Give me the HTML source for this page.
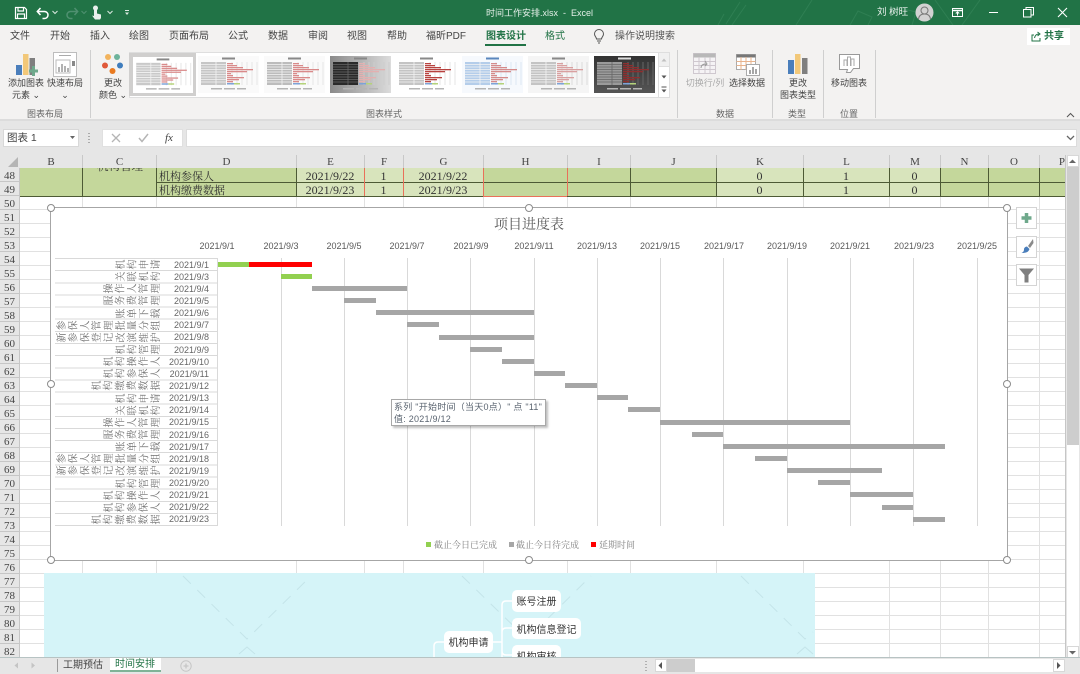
<!DOCTYPE html>
<html lang="zh">
<head>
<meta charset="utf-8">
<title>时间工作安排.xlsx - Excel</title>
<style>
html,body{margin:0;padding:0;width:1080px;height:674px;overflow:hidden;background:#fff}
body{position:relative;font-family:"Liberation Sans","Noto Sans CJK SC",sans-serif;color:#444}
div,span,svg{position:absolute;box-sizing:border-box}
.t{white-space:nowrap;font-size:10px;line-height:14px;color:#444}
.lb{white-space:nowrap;font-size:9px;line-height:12px;color:#444;text-align:center}
.gl{white-space:nowrap;font-size:9px;line-height:12px;color:#666;text-align:center;top:108px}
.sep{top:50px;width:1px;height:68px;background:#cfcfcf}
.ch{top:155px;height:13px;font:11px/14px "Liberation Serif",serif;color:#444;text-align:center;border-right:1px solid #c8c8c8}
.rn{left:0;width:20px;height:14px;font:11px/16px "Liberation Serif",serif;color:#444;text-align:center;background:#e6e6e6;border-bottom:1px solid #c6c6c6;border-right:1px solid #c6c6c6}
.cl{top:168px;height:28px}
.v{top:168px;width:1px;height:28px;background:#4d5a35}
.vr{background:#e9705a}
.gv{top:196px;width:1px;height:462px;background:#e1e1e1}
.val{font:12px/14px "Liberation Serif",serif;color:#333;text-align:center;white-space:nowrap}
.cn{font:11px/14px "Liberation Serif","Noto Serif CJK SC",serif;color:#333;white-space:nowrap}
.ax{top:240px;width:50px;text-align:center;font:9px/12px "Liberation Sans",sans-serif;color:#595959;white-space:nowrap}
.gr{top:258px;width:1px;height:268px;background:#d9d9d9}
.r{left:0;width:220px;height:12px}
.n{position:absolute;left:50px;top:12px;width:12px;height:112px;writing-mode:vertical-rl;text-align:end;transform:rotate(-90deg);transform-origin:0 0;font:10px/12px "Noto Serif CJK SC",serif;letter-spacing:1.800px;color:#6f6f6f;white-space:nowrap}
.d{left:150px;width:59px;top:-.5px;text-align:right;font:9px/12px "Liberation Sans",sans-serif;color:#666;white-space:nowrap}
.b{height:5px;background:#a6a6a6}
.hd{width:8px;height:8px;border-radius:50%;background:#fff;border:1.500px solid #8c8c8c}
.cb{left:1016px;width:21px;height:22px;background:#fff;border:1px solid #d4d4d4}
.node{background:#fff;border-radius:5px;font-size:10px;line-height:25px;color:#333;text-align:center;white-space:nowrap}
.tm{top:56px;filter:blur(.35px)}
</style>
</head>
<body>

<!-- title bar -->
<div style="left:0;top:0;width:1080px;height:25px;background:#217346"></div>
<svg style="left:700px;top:0" width="300" height="25" fill="none" stroke="#2f7f53" stroke-width="1">
<path d="M40 2l-14 22M46 5l-14 20M96 25l16-25M150 25l8-14 14 6-4 8M200 8l16 4-4 13M235 0l18 25M262 25l18-25M24 14l-6 11"/>
</svg>
<svg style="left:14px;top:6px" width="14" height="14" fill="none" stroke="#fff" stroke-width="1.200"><path d="M1.500 1.500h9l2 2v9h-11zM4 1.500v3.500h5.500v-3.500M3.500 12.500v-4.500h7v4.500"/></svg>
<svg style="left:36px;top:6px" width="14" height="14" fill="none" stroke="#fff" stroke-width="1.500"><path d="M1.500 5.500h7a3.500 3.500 0 0 1 0 7h-2M4.500 2l-3.200 3.500 3.200 3.500"/></svg>
<svg style="left:52px;top:10px" width="6" height="5" fill="none" stroke="#dbe8e0"><path d="M.5 1l2.500 2.500 2.500-2.500"/></svg>
<svg style="left:65px;top:6px" width="14" height="14" fill="none" stroke="#4f9070" stroke-width="1.500"><path d="M12.500 5.500h-7a3.500 3.500 0 0 0 0 7h2M9.500 2l3.200 3.500-3.200 3.500"/></svg>
<svg style="left:81px;top:10px" width="6" height="5" fill="none" stroke="#4f9070"><path d="M.5 1l2.500 2.500 2.500-2.500"/></svg>
<svg style="left:90px;top:5px" width="14" height="15" fill="#e8f0ec"><circle cx="5.500" cy="3" r="2.500"/><path d="M4 5h3v3.500l4 1v3.500l-1 1.500h-5l-3-4 2 .5z"/></svg>
<svg style="left:107px;top:10px" width="6" height="5" fill="none" stroke="#dbe8e0"><path d="M.5 1l2.500 2.500 2.500-2.500"/></svg>
<svg style="left:124px;top:10px" width="6" height="6" fill="#dbe8e0"><rect x="1" y="0" width="4" height="1"/><path d="M1 2.500h4l-2 2.500z"/></svg>
<div class="t" style="left:486px;top:6px;color:#e4efe8;font-size:9px">时间工作安排.xlsx&nbsp; -&nbsp; Excel</div>
<div class="t" style="left:877px;top:6px;color:#f0f5f2;font-size:9.500px">刘 树旺</div>
<svg style="left:915px;top:3px" width="19" height="19"><circle cx="9.500" cy="9.500" r="9" fill="#d2d2d2"/><g fill="none" stroke="#777" stroke-width="1"><circle cx="9.500" cy="7.500" r="3.500"/><path d="M3.500 16c.5-3.500 3-5 6-5s5.500 1.500 6 5"/></g></svg>
<svg style="left:952px;top:7px" width="12" height="11" fill="none" stroke="#fff"><rect x=".5" y="1.500" width="10" height="8"/><path d="M.5 3.500h10" stroke-width="1.500"/><path d="M5.500 8.500v-3.500M3.800 6.500l1.700-1.700 1.700 1.700"/></svg>
<div style="left:989px;top:12px;width:9px;height:1px;background:#fff"></div>
<svg style="left:1023px;top:7px" width="11" height="11" fill="none" stroke="#fff"><rect x=".5" y="2.500" width="7.500" height="7.500"/><path d="M3 2.500v-2h7.500v7.500h-2.500"/></svg>
<svg style="left:1057px;top:7px" width="11" height="11" fill="none" stroke="#fff" stroke-width="1.100"><path d="M1 1l9 9M10 1l-9 9"/></svg>

<!-- ribbon -->
<div style="left:0;top:25px;width:1080px;height:96px;background:#f3f2f1;border-bottom:2px solid #dcdcdc"></div>
<div class="t" style="left:10px;top:30px">文件</div>
<div class="t" style="left:50px;top:30px">开始</div>
<div class="t" style="left:90px;top:30px">插入</div>
<div class="t" style="left:129px;top:30px">绘图</div>
<div class="t" style="left:169px;top:30px">页面布局</div>
<div class="t" style="left:228px;top:30px">公式</div>
<div class="t" style="left:268px;top:30px">数据</div>
<div class="t" style="left:308px;top:30px">审阅</div>
<div class="t" style="left:347px;top:30px">视图</div>
<div class="t" style="left:387px;top:30px">帮助</div>
<div class="t" style="left:426px;top:30px">福昕PDF</div>
<div class="t" style="left:486px;top:30px;color:#217346;font-weight:bold">图表设计</div>
<div style="left:485px;top:44px;width:41px;height:2px;background:#217346"></div>
<div class="t" style="left:545px;top:30px;color:#217346">格式</div>
<svg style="left:593px;top:29px" width="12" height="15" fill="none" stroke="#555"><path d="M3.500 10c0-2-2-2.500-2-5a4.500 4.500 0 0 1 9 0c0 2.500-2 3-2 5zM4 12h4M5 14h2"/></svg>
<div class="t" style="left:615px;top:30px;color:#555">操作说明搜索</div>
<div style="left:1027px;top:28px;width:43px;height:17px;background:#fff"></div>
<svg style="left:1031px;top:31px" width="11" height="11" fill="none" stroke="#217346"><path d="M3 4h-2v6h8v-3M3.500 7c.5-2.500 2-4 4.500-4M6.500 1l2.500 2-2.500 2"/></svg>
<div class="t" style="left:1044px;top:30px;color:#217346;font-weight:bold">共享</div>

<!-- ribbon buttons -->
<svg style="left:14px;top:52px" width="26" height="26"><rect x="2" y="13" width="6" height="10" fill="#4a7ebb"/><rect x="9" y="2" width="5.500" height="21" fill="#f2c879"/><rect x="15.500" y="6" width="5.500" height="17" fill="#7f7f7f"/><path d="M15 19h9M19.500 14v10" stroke="#6fa98c" stroke-width="3"/></svg>
<div class="lb" style="left:8px;top:77px;width:36px">添加图表</div>
<div class="lb" style="left:8px;top:89px;width:36px">元素 ⌄</div>
<svg style="left:53px;top:52px" width="24" height="25"><rect x=".5" y=".5" width="23" height="24" fill="#fff" stroke="#bdbdbd"/><path d="M6 3.500h12" stroke="#aaa"/><rect x="3" y="8" width="14" height="13" fill="none" stroke="#bbb"/><path d="M6 20v-5M9 20v-8M12 20v-6M15 20v-4" stroke="#999" stroke-width="1.500"/><rect x="19" y="9" width="3" height="5" fill="#888"/></svg>
<div class="lb" style="left:47px;top:77px;width:36px">快速布局</div>
<div class="lb" style="left:47px;top:89px;width:36px">⌄</div>
<div class="sep" style="left:90px"></div>
<svg style="left:100px;top:52px" width="26" height="24"><circle cx="8" cy="5" r="3" fill="#f2b35d"/><circle cx="17" cy="5" r="3" fill="#6db39b"/><circle cx="5" cy="13.500" r="3" fill="#e0593a"/><circle cx="20" cy="13.500" r="3" fill="#3f7dbd"/><circle cx="12.500" cy="19" r="3" fill="#e97a1f"/></svg>
<div class="lb" style="left:95px;top:77px;width:36px">更改</div>
<div class="lb" style="left:95px;top:89px;width:36px">颜色 ⌄</div>

<!-- gallery -->
<div style="left:129px;top:52px;width:541px;height:46px;background:#fff;border:1px solid #dedede"></div>
<svg width="0" height="0" style="left:0;top:0">
<symbol id="g" viewBox="0 0 61 37">
<rect x="3" y="6" width="25" height="23" style="fill:var(--tb,#c9c9c9)"/>
<path d="M3 8.500h25M3 11h25M3 13.500h25M3 16h25M3 18.500h25M3 21h25M3 23.500h25M3 26h25M18 6v23" style="stroke:var(--tl,#f3f3f3)" stroke-width=".8"/>
<path d="M34 6v23M39 6v23M44 6v23M49 6v23M54 6v23M59 6v23" style="stroke:var(--gl,#e6e6e6)" stroke-width="1"/>
<g style="fill:var(--bar,#d98a8a)"><rect x="29" y="7" width="6" height="1.300"/><rect x="29" y="9" width="10" height="1.300"/><rect x="29" y="11" width="16" height="1.300"/><rect x="29" y="13" width="26" height="1.300"/><rect x="29" y="15" width="20" height="1.300"/><rect x="29" y="17" width="4" height="1.300"/><rect x="29" y="19" width="6" height="1.300"/><rect x="29" y="21" width="17" height="1.300"/><rect x="29" y="23" width="12" height="1.300"/><rect x="29" y="25" width="6" height="1.300"/></g>
<rect x="29" y="27" width="7" height="1.500" fill="#7ca3d8"/><rect x="36" y="27" width="6" height="1.500" fill="#b5d37a"/>
<rect x="24" y="1.500" width="13" height="2" style="fill:var(--ti,#888)"/>
<rect x="13" y="32" width="11" height="1.500" fill="#b5b5b5"/><rect x="26" y="32" width="11" height="1.500" fill="#b5b5b5"/><rect x="39" y="32" width="9" height="1.500" fill="#b5b5b5"/>
</symbol>
</svg>
<div style="left:129px;top:53px;width:67px;height:43px;background:#d0cfce"></div>
<svg class="tm" style="left:133px;top:57px;background:#fff" width="60" height="36"><use href="#g"/></svg>
<svg class="tm" style="left:198px;background:#fafafa;--tb:#c6c6c6" width="61" height="37"><use href="#g"/></svg>
<svg class="tm" style="left:264px;background:#fafafa;--tb:#bcbcbc" width="61" height="37"><use href="#g"/></svg>
<svg class="tm" style="left:330px;background:linear-gradient(90deg,#8a8a8a,#dcdcdc);--tb:#2a2a2a;--tl:#666;--gl:#ccc;--bar:#e3b0b0" width="61" height="37"><use href="#g"/></svg>
<svg class="tm" style="left:396px;background:#fff;--tb:#c4c4c4;--bar:#b8423f" width="61" height="37"><use href="#g"/></svg>
<svg class="tm" style="left:462px;background:#f6f9fd;--tb:#b4cdea;--gl:#dce7f3;--bar:#d58b8b;--ti:#5a86bd" width="61" height="37"><use href="#g"/></svg>
<svg class="tm" style="left:528px;background:#f5f5f5;--tb:#c4c4c4;--gl:#dcdcdc;--bar:#d9a0a0" width="61" height="37"><use href="#g"/></svg>
<svg class="tm" style="left:594px;background:linear-gradient(180deg,#333,#555);--tb:#9a9a9a;--tl:#666;--gl:#666;--bar:#8e2f2f;--ti:#ddd" width="61" height="37"><use href="#g"/></svg>
<div style="left:658px;top:52px;width:12px;height:46px;background:#fff;border:1px solid #dedede"></div>
<div style="left:658px;top:52px;width:12px;height:15px;background:#f0f0f0;border:1px solid #dedede"></div>
<svg style="left:658px;top:52px" width="12" height="46"><path d="M3.500 9.500h5l-2.500-3z" fill="#c0c0c0"/><path d="M3.500 23.500h5l-2.500 3z" fill="#555"/><path d="M3.500 35h5" stroke="#555"/><path d="M3.500 37.500h5l-2.500 3z" fill="#555"/></svg>
<div class="sep" style="left:677px"></div>
<svg style="left:693px;top:53px" width="24" height="22" fill="none" stroke="#cfc8cf"><rect x=".5" y=".5" width="22" height="20" fill="#f5f3f5"/><rect x=".5" y=".5" width="22" height="4" fill="#b8b8b8" stroke="none"/><path d="M.5 8.500h22M.5 12.500h22M.5 16.500h22M6 4v17M12 4v17M17 4v17"/><path d="M8 15c0-3 2-4 5-4M12 8l2 3-2 2" stroke="#999"/></svg>
<div class="lb" style="left:683px;top:77px;width:44px;color:#aaa">切换行/列</div>
<svg style="left:736px;top:54px" width="24" height="22" fill="none" stroke="#aaa"><rect x=".5" y=".5" width="19" height="15" fill="#fff"/><rect x=".5" y=".5" width="19" height="3" fill="#777" stroke="none"/><path d="M.5 7.500h19M.5 11.500h19M5 3v13M10 3v13M15 3v13" stroke="#e8b48e"/><rect x="10.500" y="10.500" width="13" height="11" fill="#fff"/><path d="M14 20v-4M17 20v-7M20 20v-5" stroke="#888" stroke-width="1.500"/></svg>
<div class="lb" style="left:728px;top:77px;width:38px">选择数据</div>
<div class="gl" style="left:705px;width:40px">数据</div>
<div class="sep" style="left:772px"></div>
<svg style="left:788px;top:54px" width="20" height="20"><rect x="0" y="6" width="6" height="14" fill="#4a7ebb"/><rect x="7" y="0" width="5.500" height="20" fill="#f2c879"/><rect x="14" y="4" width="5.500" height="16" fill="#7f7f7f"/></svg>
<div class="lb" style="left:780px;top:77px;width:36px">更改</div>
<div class="lb" style="left:779px;top:89px;width:38px">图表类型</div>
<div class="gl" style="left:777px;width:40px">类型</div>
<div class="sep" style="left:823px"></div>
<svg style="left:839px;top:54px" width="22" height="20" fill="none" stroke="#999"><path d="M.5 .5h20v14h-6l-3 4h-4l1-3h-8z" fill="#fff"/><path d="M5 12v-6h3v6M8.500 12v-9h3v9M12 12v-7h3v7" stroke="#aaa"/></svg>
<div class="lb" style="left:830px;top:77px;width:38px">移动图表</div>
<div class="gl" style="left:829px;width:40px">位置</div>
<div class="sep" style="left:875px"></div>
<div class="gl" style="left:25px;width:40px">图表布局</div>
<div class="gl" style="left:362px;width:44px">图表样式</div>
<svg style="left:1066px;top:112px" width="9" height="6" fill="none" stroke="#555"><path d="M1 5l3.500-3.500 3.500 3.500"/></svg>

<!-- formula bar -->
<div style="left:0;top:121px;width:1080px;height:34px;background:#e6e6e6"></div>
<div style="left:3px;top:129px;width:76px;height:18px;background:#fff;border:1px solid #d8d8d8"></div>
<div class="t" style="left:7px;top:131px;font-size:10.500px">图表 1</div>
<svg style="left:70px;top:136px" width="5" height="4"><path d="M0 0h5l-2.500 3z" fill="#666"/></svg>
<svg style="left:88px;top:132px" width="3" height="12" fill="#aaa"><rect y="1" width="2" height="1"/><rect y="4" width="2" height="1"/><rect y="7" width="2" height="1"/><rect y="10" width="2" height="1"/></svg>
<div style="left:102px;top:129px;width:81px;height:18px;background:#fff;border:1px solid #e0e0e0"></div>
<svg style="left:111px;top:133px" width="10" height="10" fill="none" stroke="#b5b5b5" stroke-width="1.300"><path d="M1 1l8 8M9 1l-8 8"/></svg>
<svg style="left:138px;top:133px" width="11" height="10" fill="none" stroke="#b5b5b5" stroke-width="1.500"><path d="M1 5l3 3.500 6-7.500"/></svg>
<div class="t" style="left:165px;top:131px;font:italic 11px/14px 'Liberation Serif',serif;color:#444">fx</div>
<div style="left:186px;top:129px;width:891px;height:18px;background:#fff;border:1px solid #dcdcdc"></div>
<svg style="left:1066px;top:135px" width="9" height="6" fill="none" stroke="#666" stroke-width="1.300"><path d="M1 1l3.500 3.500 3.500-3.500"/></svg>

<!-- sheet grid -->
<div style="left:20px;top:196px;width:1045px;height:462px;background:repeating-linear-gradient(to bottom,#fff 0,#fff 13px,#e1e1e1 13px,#e1e1e1 14px)"></div>
<div class="gv" style="left:82px"></div><div class="gv" style="left:156px"></div><div class="gv" style="left:296px"></div><div class="gv" style="left:364px"></div><div class="gv" style="left:403px"></div><div class="gv" style="left:483px"></div><div class="gv" style="left:567px"></div><div class="gv" style="left:630px"></div><div class="gv" style="left:716px"></div><div class="gv" style="left:803px"></div><div class="gv" style="left:889px"></div><div class="gv" style="left:940px"></div><div class="gv" style="left:988px"></div><div class="gv" style="left:1039px"></div>
<div style="left:1065px;top:155px;width:1px;height:503px;background:#c6c6c6"></div>

<!-- column header -->
<div style="left:0;top:155px;width:1065px;height:13px;background:#e6e6e6"></div>
<svg style="left:8px;top:157px" width="11" height="10"><path d="M10 0v10h-10z" fill="#b5b5b5"/></svg>
<div class="ch" style="left:20px;width:63px">B</div>
<div class="ch" style="left:83px;width:74px">C</div>
<div class="ch" style="left:157px;width:140px">D</div>
<div class="ch" style="left:297px;width:68px">E</div>
<div class="ch" style="left:365px;width:39px">F</div>
<div class="ch" style="left:404px;width:80px">G</div>
<div class="ch" style="left:484px;width:84px">H</div>
<div class="ch" style="left:568px;width:63px">I</div>
<div class="ch" style="left:631px;width:86px">J</div>
<div class="ch" style="left:717px;width:87px">K</div>
<div class="ch" style="left:804px;width:86px">L</div>
<div class="ch" style="left:890px;width:51px">M</div>
<div class="ch" style="left:941px;width:48px">N</div>
<div class="ch" style="left:989px;width:51px">O</div>
<div class="ch" style="left:1040px;width:25px;border-right:0;text-align:right;overflow:hidden">P</div>

<!-- row header -->
<div class="rn" style="top:168px">48</div><div class="rn" style="top:182px">49</div><div class="rn" style="top:196px">50</div><div class="rn" style="top:210px">51</div><div class="rn" style="top:224px">52</div><div class="rn" style="top:238px">53</div><div class="rn" style="top:252px">54</div><div class="rn" style="top:266px">55</div><div class="rn" style="top:280px">56</div><div class="rn" style="top:294px">57</div><div class="rn" style="top:308px">58</div><div class="rn" style="top:322px">59</div><div class="rn" style="top:336px">60</div><div class="rn" style="top:350px">61</div><div class="rn" style="top:364px">62</div><div class="rn" style="top:378px">63</div><div class="rn" style="top:392px">64</div><div class="rn" style="top:406px">65</div><div class="rn" style="top:420px">66</div><div class="rn" style="top:434px">67</div><div class="rn" style="top:448px">68</div><div class="rn" style="top:462px">69</div><div class="rn" style="top:476px">70</div><div class="rn" style="top:490px">71</div><div class="rn" style="top:504px">72</div><div class="rn" style="top:518px">73</div><div class="rn" style="top:532px">74</div><div class="rn" style="top:546px">75</div><div class="rn" style="top:560px">76</div><div class="rn" style="top:574px">77</div><div class="rn" style="top:588px">78</div><div class="rn" style="top:602px">79</div><div class="rn" style="top:616px">80</div><div class="rn" style="top:630px">81</div><div class="rn" style="top:644px">82</div>

<!-- rows 48,49 -->
<div class="cl" style="left:20px;width:276px;background:#c4d79b"></div>
<div class="cl" style="left:296px;width:187px;background:#d8e4bc"></div>
<div class="cl" style="left:483px;width:233px;background:#c4d79b"></div>
<div class="cl" style="left:716px;width:224px;background:#d8e4bc"></div>
<div class="cl" style="left:940px;width:125px;background:#c4d79b"></div>
<div style="left:82px;top:168px;width:75px;height:7px;overflow:hidden"><div class="cn" style="left:15px;top:-8px;font-size:11.500px">机构管理</div></div>
<div style="left:156px;top:182px;width:909px;height:1px;background:#4d5a35"></div>
<div style="left:20px;top:196px;width:1045px;height:1px;background:#4d5a35"></div>
<div style="left:483px;top:196px;width:84px;height:1px;background:#e9705a"></div>
<div class="v" style="left:82px"></div><div class="v" style="left:156px"></div><div class="v" style="left:296px"></div>
<div class="v vr" style="left:364px"></div><div class="v vr" style="left:403px"></div><div class="v vr" style="left:483px"></div><div class="v vr" style="left:567px"></div>
<div class="v" style="left:630px"></div><div class="v" style="left:716px"></div><div class="v" style="left:803px"></div><div class="v" style="left:889px"></div><div class="v" style="left:940px"></div><div class="v" style="left:988px"></div><div class="v" style="left:1039px"></div>
<div class="cn" style="left:159px;top:170px">机构参保人</div>
<div class="cn" style="left:159px;top:184px">机构缴费数据</div>
<div class="val" style="left:296px;top:169px;width:68px">2021/9/22</div>
<div class="val" style="left:296px;top:183px;width:68px">2021/9/23</div>
<div class="val" style="left:364px;top:169px;width:39px">1</div>
<div class="val" style="left:364px;top:183px;width:39px">1</div>
<div class="val" style="left:403px;top:169px;width:80px">2021/9/22</div>
<div class="val" style="left:403px;top:183px;width:80px">2021/9/23</div>
<div class="val" style="left:716px;top:169px;width:87px">0</div>
<div class="val" style="left:716px;top:183px;width:87px">0</div>
<div class="val" style="left:803px;top:169px;width:86px">1</div>
<div class="val" style="left:803px;top:183px;width:86px">1</div>
<div class="val" style="left:889px;top:169px;width:51px">0</div>
<div class="val" style="left:889px;top:183px;width:51px">0</div>

<!-- mind map -->
<div style="left:44px;top:573px;width:771px;height:85px;background:#d5f4f8;overflow:hidden"></div>
<svg style="left:44px;top:573px" width="771" height="85" fill="none" stroke="#c4e4e9" stroke-width="1">
<path d="M139 3l64 63 64-63" stroke-dasharray="11 9"/><path d="M195 81l8-7 8 7"/>
<path d="M418 3l65 63 64-63" stroke-dasharray="11 9"/><path d="M697 3l64 63 8-7" stroke-dasharray="11 9"/><path d="M753 81l8-7 8 7"/>
</svg>
<svg style="left:430px;top:590px" width="90" height="68" fill="none" stroke="#fff" stroke-width="1.500">
<path d="M14 52h-6q-4 0-4 4v12M63 52h9M82 11h-6q-4 0-4 4v53M82 38h-6q-4 0-4 4M82 65h-6q-4 0-4-4"/>
</svg>
<div class="node" style="left:512px;top:590px;width:49px;height:22px">账号注册</div>
<div class="node" style="left:512px;top:618px;width:69px;height:21px">机构信息登记</div>
<div style="left:512px;top:645px;width:49px;height:13px;overflow:hidden"><div class="node" style="left:0;top:0;width:49px;height:22px">机构审核</div></div>
<div class="node" style="left:444px;top:631px;width:49px;height:22px">机构申请</div>

<!-- chart -->
<div style="left:50px;top:207px;width:958px;height:354px;background:#fff;border:1.500px solid #a6a6a6"></div>
<div style="left:429px;top:214px;width:200px;text-align:center;font:14px/20px 'Noto Serif CJK SC',serif;color:#595959;white-space:nowrap">项目进度表</div>

<div class="ax" style="left:192px">2021/9/1</div>
<div class="ax" style="left:256px">2021/9/3</div>
<div class="ax" style="left:319px">2021/9/5</div>
<div class="ax" style="left:382px">2021/9/7</div>
<div class="ax" style="left:446px">2021/9/9</div>
<div class="ax" style="left:509px">2021/9/11</div>
<div class="ax" style="left:572px">2021/9/13</div>
<div class="ax" style="left:635px">2021/9/15</div>
<div class="ax" style="left:699px">2021/9/17</div>
<div class="ax" style="left:762px">2021/9/19</div>
<div class="ax" style="left:825px">2021/9/21</div>
<div class="ax" style="left:889px">2021/9/23</div>
<div class="ax" style="left:952px">2021/9/25</div>

<div class="gr" style="left:281px"></div><div class="gr" style="left:344px"></div><div class="gr" style="left:407px"></div><div class="gr" style="left:470px"></div><div class="gr" style="left:534px"></div><div class="gr" style="left:597px"></div><div class="gr" style="left:660px"></div><div class="gr" style="left:723px"></div><div class="gr" style="left:787px"></div><div class="gr" style="left:850px"></div><div class="gr" style="left:913px"></div><div class="gr" style="left:977px"></div>

<div style="left:55px;top:258px;width:163px;height:268px;border-right:1px solid #d9d9d9;background:repeating-linear-gradient(to bottom,#d9d9d9 0,#d9d9d9 1px,#fff 1px,#fff 12.140px)"></div>
<div style="left:55px;top:525px;width:163px;height:1px;background:#d9d9d9"></div>

<div class="r" style="top:259px"><span class="n">机构申请</span><span class="d">2021/9/1</span></div>
<div class="r" style="top:271.100px"><span class="n">关联机构</span><span class="d">2021/9/3</span></div>
<div class="r" style="top:283.300px"><span class="n">操作人管理</span><span class="d">2021/9/4</span></div>
<div class="r" style="top:295.400px"><span class="n">服务费管理</span><span class="d">2021/9/5</span></div>
<div class="r" style="top:307.600px"><span class="n">账单下载</span><span class="d">2021/9/6</span></div>
<div class="r" style="top:319.700px"><span class="n">参保人管理<span style="position:static;letter-spacing:-6px">-</span>批量分组</span><span class="d">2021/9/7</span></div>
<div class="r" style="top:331.800px"><span class="n">新参保登记改演维护</span><span class="d">2021/9/8</span></div>
<div class="r" style="top:344px"><span class="n">机构管理</span><span class="d">2021/9/9</span></div>
<div class="r" style="top:356.100px"><span class="n">机构操作人</span><span class="d">2021/9/10</span></div>
<div class="r" style="top:368.300px"><span class="n">机构参保人</span><span class="d">2021/9/11</span></div>
<div class="r" style="top:380.400px"><span class="n">机构缴费数据</span><span class="d">2021/9/12</span></div>
<div class="r" style="top:392.500px"><span class="n">机构申请</span><span class="d">2021/9/13</span></div>
<div class="r" style="top:404.700px"><span class="n">关联机构</span><span class="d">2021/9/14</span></div>
<div class="r" style="top:416.800px"><span class="n">操作人管理</span><span class="d">2021/9/15</span></div>
<div class="r" style="top:429px"><span class="n">服务费管理</span><span class="d">2021/9/16</span></div>
<div class="r" style="top:441.100px"><span class="n">账单下载</span><span class="d">2021/9/17</span></div>
<div class="r" style="top:453.200px"><span class="n">参保人管理<span style="position:static;letter-spacing:-6px">-</span>批量分组</span><span class="d">2021/9/18</span></div>
<div class="r" style="top:465.400px"><span class="n">新参保登记改演维护</span><span class="d">2021/9/19</span></div>
<div class="r" style="top:477.500px"><span class="n">机构管理</span><span class="d">2021/9/20</span></div>
<div class="r" style="top:489.700px"><span class="n">机构操作人</span><span class="d">2021/9/21</span></div>
<div class="r" style="top:501.800px"><span class="n">机构参保人</span><span class="d">2021/9/22</span></div>
<div class="r" style="top:513.900px"><span class="n">机构缴费数据</span><span class="d">2021/9/23</span></div>

<!-- bars -->
<div class="b" style="left:218px;top:261.700px;width:31px;background:#92d050"></div>
<div class="b" style="left:249px;top:261.700px;width:63px;background:#ff0000"></div>
<div class="b" style="left:281px;top:273.800px;width:31px;background:#92d050"></div>
<div class="b" style="left:312px;top:286px;width:95px"></div>
<div class="b" style="left:344px;top:298.100px;width:32px"></div>
<div class="b" style="left:376px;top:310.300px;width:158px"></div>
<div class="b" style="left:407px;top:322.400px;width:32px"></div>
<div class="b" style="left:439px;top:334.500px;width:95px"></div>
<div class="b" style="left:470px;top:346.700px;width:32px"></div>
<div class="b" style="left:502px;top:358.800px;width:32px"></div>
<div class="b" style="left:534px;top:371px;width:31px"></div>
<div class="b" style="left:565px;top:383.100px;width:32px"></div>
<div class="b" style="left:597px;top:395.200px;width:31px"></div>
<div class="b" style="left:628px;top:407.400px;width:32px"></div>
<div class="b" style="left:660px;top:419.500px;width:190px"></div>
<div class="b" style="left:692px;top:431.700px;width:31px"></div>
<div class="b" style="left:723px;top:443.800px;width:222px"></div>
<div class="b" style="left:755px;top:455.900px;width:32px"></div>
<div class="b" style="left:787px;top:468.100px;width:95px"></div>
<div class="b" style="left:818px;top:480.200px;width:32px"></div>
<div class="b" style="left:850px;top:492.400px;width:63px"></div>
<div class="b" style="left:882px;top:504.500px;width:31px"></div>
<div class="b" style="left:913px;top:516.600px;width:32px"></div>

<!-- tooltip -->
<div style="left:391px;top:399px;width:155px;height:27px;background:#fff;border:1px solid #a8a8a8;box-shadow:2px 2px 2px rgba(0,0,0,.25)"></div>
<div style="left:394px;top:401px;font-size:9px;letter-spacing:.25px;line-height:12px;color:#5a6470;white-space:nowrap">系列 "开始时间（当天0点）" 点 "11"</div>
<div style="left:394px;top:413px;font-size:9px;letter-spacing:.25px;line-height:12px;color:#5a6470;white-space:nowrap">值: 2021/9/12</div>

<!-- legend -->
<div style="left:426px;top:542px;width:5px;height:5px;background:#92d050"></div>
<div style="left:434px;top:539px;font:9px/12px 'Noto Serif CJK SC',serif;color:#7f7f7f;white-space:nowrap">截止今日已完成</div>
<div style="left:509px;top:542px;width:5px;height:5px;background:#a6a6a6"></div>
<div style="left:516px;top:539px;font:9px/12px 'Noto Serif CJK SC',serif;color:#7f7f7f;white-space:nowrap">截止今日待完成</div>
<div style="left:591px;top:542px;width:5px;height:5px;background:#ff0000"></div>
<div style="left:599px;top:539px;font:9px/12px 'Noto Serif CJK SC',serif;color:#7f7f7f;white-space:nowrap">延期时间</div>

<!-- handles -->
<div class="hd" style="left:47px;top:204px"></div>
<div class="hd" style="left:525px;top:204px"></div>
<div class="hd" style="left:1003px;top:204px"></div>
<div class="hd" style="left:47px;top:380px"></div>
<div class="hd" style="left:1003px;top:380px"></div>
<div class="hd" style="left:47px;top:556px"></div>
<div class="hd" style="left:525px;top:556px"></div>
<div class="hd" style="left:1003px;top:556px"></div>

<!-- chart buttons -->
<div class="cb" style="top:207px"></div>
<svg style="left:1016px;top:207px" width="21" height="22"><path d="M10.500 6v10M5.500 11h10" stroke="#6fa98c" stroke-width="3.500"/></svg>
<div class="cb" style="top:236px"></div>
<svg style="left:1016px;top:236px" width="21" height="22"><path d="M17 3l-5 7 2 2 3.500-5z" fill="#8a8a8a"/><path d="M11 10.500l2.500 2.500c-1 3-3 4-8 4 2-1 2.500-2 2.500-4 0-1 1.500-2.500 3-2.500z" fill="#4a7ebb"/></svg>
<div class="cb" style="top:264px"></div>
<svg style="left:1016px;top:264px" width="21" height="22"><path d="M3 4.500h15l-5.500 6.500v7.500h-4v-7.500z" fill="#7f7f7f"/></svg>

<!-- vertical scrollbar -->
<div style="left:1066px;top:155px;width:14px;height:503px;background:#e6e6e6"></div>
<div style="left:1067px;top:155px;width:12px;height:503px;background:#fff"></div>
<div style="left:1067px;top:167px;width:12px;height:278px;background:#cdcdcd"></div>
<div style="left:1067px;top:155px;width:12px;height:12px;background:#fff;border:1px solid #d8d8d8"></div>
<svg style="left:1069px;top:159px" width="8" height="4"><path d="M0 4h7l-3.500-3.500z" fill="#666"/></svg>
<div style="left:1067px;top:646px;width:12px;height:12px;background:#fff;border:1px solid #d8d8d8"></div>
<svg style="left:1069px;top:651px" width="8" height="4"><path d="M0 0h7l-3.500 3.500z" fill="#666"/></svg>

<!-- bottom bar -->
<div style="left:0;top:657px;width:1080px;height:17px;background:#e6e6e6;border-top:1px solid #b7c3c3"></div>
<svg style="left:12px;top:662px" width="26" height="8" fill="#c4c4c4"><path d="M6 .5v6l-3.500-3z"/><path d="M19.500 .5v6l3.500-3z"/></svg>
<div style="left:57px;top:659px;width:1px;height:13px;background:#9a9a9a"></div>
<div class="t" style="left:63px;top:659px;color:#444">工期预估</div>
<div style="left:110px;top:658px;width:51px;height:14px;background:#fff;border-bottom:2px solid #7fb397"></div>
<div class="t" style="left:115px;top:658px;color:#217346">时间安排</div>
<svg style="left:180px;top:660px" width="12" height="12" fill="none" stroke="#c6c6c6"><circle cx="6" cy="6" r="5.200"/><path d="M3.500 6h5M6 3.500v5" stroke-width="1.300"/></svg>
<svg style="left:645px;top:661px" width="3" height="11" fill="#b0b0b0"><rect y="0" width="2" height="1"/><rect y="3" width="2" height="1"/><rect y="6" width="2" height="1"/><rect y="9" width="2" height="1"/></svg>
<div style="left:655px;top:659px;width:410px;height:13px;background:#fff"></div>
<div style="left:667px;top:659px;width:28px;height:13px;background:#cdcdcd"></div>
<div style="left:655px;top:659px;width:12px;height:13px;background:#fff;border:1px solid #d8d8d8"></div>
<svg style="left:658px;top:662px" width="5" height="8"><path d="M4 0v7l-3.500-3.500z" fill="#555"/></svg>
<div style="left:1053px;top:659px;width:12px;height:13px;background:#fff;border:1px solid #d8d8d8"></div>
<svg style="left:1057px;top:662px" width="5" height="8"><path d="M0 0v7l3.500-3.500z" fill="#555"/></svg>

</body>
</html>
